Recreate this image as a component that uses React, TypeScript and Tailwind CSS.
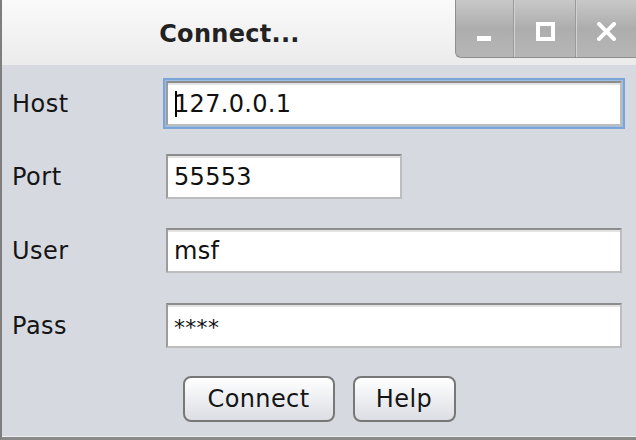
import React from "react";

function Field({ width, focused, children }: { width: string; focused?: boolean; children?: React.ReactNode }) {
  return (
    <div
      className={
        "relative h-[45px] bg-white border-2 border-t-[#8c8c8c] border-l-[#9c9c9c] border-r-[#bdbdbd] border-b-[#bdbdbd] flex items-center pl-[6px] text-[24px] tracking-[0.3px] text-[#111] " +
        width +
        (focused
          ? " shadow-[inset_0_2px_0_#e3e3e3,0_0_0_1px_#9dbde3,0_0_0_3px_#7aa5d6]"
          : " shadow-[inset_0_2px_0_#e3e3e3]")
      }
    >
      {children}
    </div>
  );
}

function Row({ label, children, mt }: { label: string; children: React.ReactNode; mt: string }) {
  return (
    <div className={"flex items-center " + mt}>
      <div className="w-[164px] pl-[10px] text-[24px] tracking-[0.5px] text-[#151515]">{label}</div>
      {children}
    </div>
  );
}

export default function App() {
  return (
    <div className="w-[636px] h-[440px] overflow-hidden flex flex-col border-l-2 border-l-[#7e7e7e] border-b-[3px] border-b-[#8a8a8a] font-['DejaVu_Sans',sans-serif] relative">
      {/* title bar */}
      <div className="h-[65px] flex bg-gradient-to-b from-[#fafafa] to-[#ebebeb]">
        <div className="flex-1 flex items-center justify-center font-bold text-[24px] tracking-[0.3px] text-[#222] pl-[2px] pt-[3px]">
          Connect...
        </div>
        <div className="w-[181px] h-[58px] flex rounded-bl-[6px] border-l border-b border-[#8f8f8f] bg-gradient-to-b from-[#c8c8c8] via-[#adadad] to-[#b6b6b6] overflow-hidden">
          <div className="w-[58px] flex justify-center pt-[22px] border-r border-r-[#9a9a9a]">
            <svg width="19" height="19" viewBox="0 0 19 19">
              <rect x="2" y="14" width="14" height="5" fill="#ffffff" />
            </svg>
          </div>
          <div className="w-[62px] flex justify-center pt-[22px] border-l border-l-[#d2d2d2] border-r border-r-[#9a9a9a]">
            <svg width="19" height="19" viewBox="0 0 19 19">
              <rect x="2" y="2" width="15" height="15" fill="none" stroke="#ffffff" strokeWidth="4" />
            </svg>
          </div>
          <div className="flex-1 flex justify-center pt-[22px] border-l border-l-[#d2d2d2]">
            <svg width="19" height="19" viewBox="0 0 19 19">
              <path d="M2 2 L17 17 M17 2 L2 17" stroke="#ffffff" strokeWidth="4" strokeLinecap="square" />
            </svg>
          </div>
        </div>
      </div>

      {/* content */}
      <div className="flex-1 bg-[#d6d9e0] flex flex-col pt-[16px]">
        <Row label="Host" mt="mt-0">
          <Field width="w-[456px]" focused>
            <span>127.0.0.1</span>
            <span className="absolute left-[7px] top-[8px] w-[2px] h-[26px] bg-black" />
          </Field>
        </Row>
        <Row label="Port" mt="mt-[28px]">
          <Field width="w-[236px]">
            <span>55553</span>
          </Field>
        </Row>
        <Row label="User" mt="mt-[29px]">
          <Field width="w-[456px]">
            <span>msf</span>
          </Field>
        </Row>
        <Row label="Pass" mt="mt-[30px]">
          <Field width="w-[456px]">
            <span className="self-start mt-[6px] text-[22px]">****</span>
          </Field>
        </Row>
        <div className="flex justify-center gap-[18px] mt-[28px]">
          <button className="w-[152px] h-[46px] rounded-[8px] border-2 border-[#777] bg-gradient-to-b from-[#ffffff] to-[#dcdee4] text-[24px] tracking-[0.4px] text-[#151515] flex items-center justify-center">
            Connect
          </button>
          <button className="w-[103px] h-[46px] rounded-[8px] border-2 border-[#777] bg-gradient-to-b from-[#ffffff] to-[#dcdee4] text-[24px] tracking-[0.4px] text-[#151515] flex items-center justify-center">
            Help
          </button>
        </div>
      </div>
      <div className="h-[1px] bg-[#efefef]" />
    </div>
  );
}
